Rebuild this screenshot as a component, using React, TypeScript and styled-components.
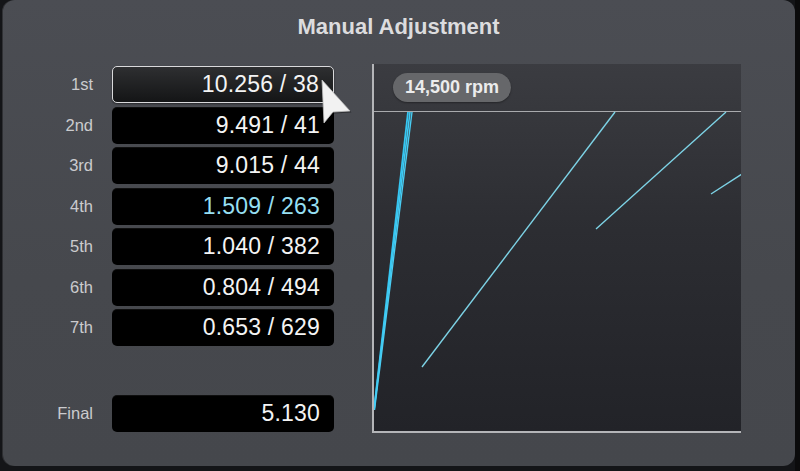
import React from "react";
import styled, { createGlobalStyle } from "styled-components";

const Global = createGlobalStyle`
  html, body { margin: 0; padding: 0; background: #121316; }
  body { font-family: "Liberation Sans", Arial, sans-serif; }
  #root { width: 800px; height: 471px; overflow: hidden; }
`;

const Screen = styled.div`
  width: 800px;
  height: 471px;
  display: flex;
  padding-left: 2px;
  box-sizing: border-box;
  background: #141518;
`;

const Panel = styled.div`
  position: relative;
  width: 793px;
  height: 466px;
  border-radius: 12px;
  background: linear-gradient(180deg, #4b4d53 0%, #46484d 60%, #45474c 100%);
  box-shadow: inset 1px 0 0 rgba(0, 0, 0, 0.35);
  display: flex;
  flex-direction: column;
`;

const Title = styled.h1`
  margin: 0;
  padding-top: 13px;
  height: 28px;
  line-height: 28px;
  text-align: center;
  font-size: 22px;
  font-weight: 700;
  color: #dcdcde;
`;

const Content = styled.div`
  display: flex;
  margin-top: 23px;
`;

const Gears = styled.div`
  display: grid;
  grid-template-columns: 91px 222px;
  grid-template-rows: repeat(7, 37px) 42px 37px;
  column-gap: 19px;
  row-gap: 3.5px;
  padding-top: 2px;
  align-content: start;
`;

const Spacer = styled.div`
  grid-column: 1 / -1;
`;

const Label = styled.div`
  display: flex;
  align-items: center;
  justify-content: flex-end;
  font-size: 16.5px;
  color: #cbcbce;
`;

const ValueBox = styled.div<{ $active?: boolean; $accent?: boolean }>`
  display: flex;
  align-items: center;
  justify-content: flex-end;
  padding-right: 14px;
  box-sizing: border-box;
  border-radius: 5px;
  font-size: 23px;
  letter-spacing: 0.2px;
  color: ${(p) => (p.$accent ? "#96dff2" : "#f4f4f4")};
  background: ${(p) =>
    p.$active ? "linear-gradient(180deg, #2e2f31 0%, #141516 100%)" : "#000"};
  border: ${(p) => (p.$active ? "1.5px solid #d9d9db" : "none")};
  box-shadow: ${(p) =>
    p.$active ? "0 1px 2px rgba(0,0,0,0.5)" : "inset 0 1px 0 rgba(255,255,255,0.06)"};
`;

const Chart = styled.div`
  position: relative;
  margin-left: 38px;
  width: 369px;
  height: 369px;
  box-sizing: border-box;
  border-left: 2px solid #b4b5b8;
  border-bottom: 2px solid #b4b5b8;
  background: linear-gradient(180deg, #3b3c41 0%, #2c2d32 45%, #222328 100%);
`;

const Plot = styled.svg`
  display: block;
  width: 100%;
  height: 100%;
`;

const RpmBadge = styled.div`
  position: absolute;
  left: 19px;
  top: 9px;
  width: 118px;
  height: 29px;
  border-radius: 15px;
  background: #66676a;
  color: #ececec;
  font-size: 18px;
  font-weight: 700;
  display: flex;
  align-items: center;
  justify-content: center;
  box-shadow: 0 1px 2px rgba(0, 0, 0, 0.35);
`;

const Cursor = styled.svg`
  position: absolute;
  left: 318px;
  top: 79px;
  width: 32px;
  height: 46px;
  overflow: visible;
`;

const EdgeStrip = styled.div`
  flex: 1;
  background: #0b0b0c;
`;

const gears = [
  { label: "1st", value: "10.256 / 38", active: true },
  { label: "2nd", value: "9.491 / 41" },
  { label: "3rd", value: "9.015 / 44" },
  { label: "4th", value: "1.509 / 263", accent: true },
  { label: "5th", value: "1.040 / 382" },
  { label: "6th", value: "0.804 / 494" },
  { label: "7th", value: "0.653 / 629" },
];

export default function App() {
  return (
    <>
      <Global />
      <Screen>
        <Panel>
          <Title>Manual Adjustment</Title>
          <Content>
            <Gears>
              {gears.map((g) => (
                <React.Fragment key={g.label}>
                  <Label>{g.label}</Label>
                  <ValueBox $active={g.active} $accent={g.accent}>
                    {g.value}
                  </ValueBox>
                </React.Fragment>
              ))}
              <Spacer />
              <Label>Final</Label>
              <ValueBox>5.130</ValueBox>
            </Gears>
            <Chart>
              <Plot viewBox="0 0 367 367" preserveAspectRatio="none">
                <line x1="0" y1="47.5" x2="367" y2="47.5" stroke="#a9aaad" strokeWidth="1.2" />
                <line x1="0" y1="346" x2="34" y2="48" stroke="#35c6f2" strokeWidth="1.8" />
                <line x1="0" y1="346" x2="36" y2="48" stroke="#3fcaf3" strokeWidth="1.6" />
                <line x1="0.5" y1="346" x2="38" y2="48" stroke="#49cdf3" strokeWidth="1.4" />
                <line x1="48" y1="303" x2="241" y2="48" stroke="#7dd3e6" strokeWidth="1.4" />
                <line x1="222" y1="165" x2="352" y2="48" stroke="#7dd3e6" strokeWidth="1.4" />
                <line x1="337" y1="130" x2="368" y2="110" stroke="#7dd3e6" strokeWidth="1.4" />
              </Plot>
              <RpmBadge>14,500 rpm</RpmBadge>
            </Chart>
          </Content>
          <Cursor viewBox="0 0 32 46">
            <path d="M2 1 L4 44 L13 33 L30 32 Z" fill="rgba(0,0,0,0.35)" transform="translate(1.5 1.5)" />
            <path d="M2 1 L4 44 L13 33 L30 32 Z" fill="#f2f2f2" stroke="#bdbdbd" strokeWidth="0.8" />
          </Cursor>
        </Panel>
        <EdgeStrip />
      </Screen>
    </>
  );
}
